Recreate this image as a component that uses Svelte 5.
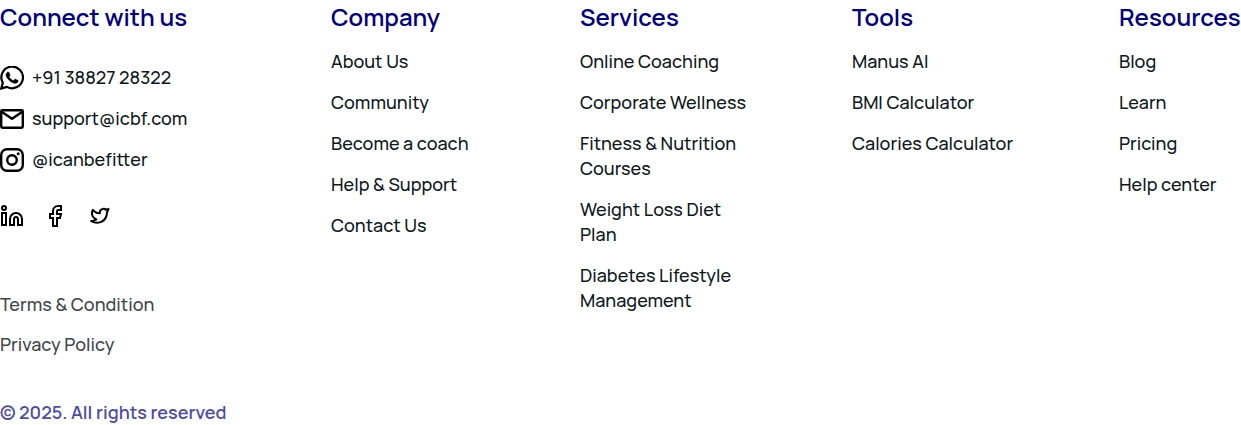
<script>
  const columns = [
    { title: 'Company', links: ['About Us', 'Community', 'Become a coach', 'Help & Support', 'Contact Us'] },
    {
      title: 'Services',
      links: [
        'Online Coaching',
        'Corporate Wellness',
        'Fitness & Nutrition Courses',
        'Weight Loss Diet Plan',
        'Diabetes Lifestyle Management'
      ]
    },
    { title: 'Tools', links: ['Manus AI', 'BMI Calculator', 'Calories Calculator'] },
    { title: 'Resources', links: ['Blog', 'Learn', 'Pricing', 'Help center'] }
  ];
</script>

<footer>
  <section class="connect">
    <h2>Connect with us</h2>
    <ul class="contacts">
      <li>
        <a href="#whatsapp">
          <svg viewBox="0 0 24 24">
            <path d="M1.3 22.4 2.8 16.8A10.8 10.8 0 1 1 7 20.9Z" fill="none" stroke="currentColor" stroke-width="2.2" />
            <path d="M17.5 14.1c-.3-.15-1.76-.87-2.03-.97-.27-.1-.47-.15-.67.15-.2.3-.77.97-.94 1.16-.17.2-.35.22-.64.08-.3-.15-1.26-.46-2.39-1.48-.88-.79-1.48-1.76-1.65-2.06-.17-.3-.02-.46.13-.6.13-.14.3-.35.45-.53.15-.17.2-.3.3-.49.1-.2.05-.37-.03-.52-.07-.15-.67-1.61-.91-2.2-.24-.6-.49-.5-.67-.51h-.57c-.2 0-.52.07-.8.37-.27.3-1.04 1.02-1.04 2.48s1.07 2.88 1.21 3.07c.15.2 2.1 3.2 5.08 4.49.7.3 1.26.49 1.7.62.7.23 1.36.2 1.87.12.57-.08 1.76-.72 2-1.41.25-.7.25-1.29.18-1.41-.08-.13-.27-.2-.57-.35Z" fill="currentColor" stroke="currentColor" stroke-width=".5" />
          </svg>
          +91 38827 28322
        </a>
      </li>
      <li>
        <a href="mailto:support@icbf.com">
          <svg viewBox="0 0 24 24" fill="none" stroke="currentColor" stroke-width="2.4">
            <rect x="1.2" y="3.2" width="21.6" height="17.6" rx="1.2" />
            <path d="m2 5 10 6.8L22 5" />
          </svg>
          support@icbf.com
        </a>
      </li>
      <li>
        <a href="#instagram">
          <svg viewBox="0 0 24 24" fill="none" stroke="currentColor" stroke-width="2.4">
            <rect x="1.2" y="1.2" width="21.6" height="21.6" rx="5.8" />
            <circle cx="12" cy="12" r="4.8" />
            <circle cx="18.2" cy="5.7" r="1.5" fill="currentColor" stroke="none" />
          </svg>
          @icanbefitter
        </a>
      </li>
    </ul>
    <div class="socials">
      <a href="#linkedin" aria-label="LinkedIn">
        <svg viewBox="0 0 24 24" fill="none" stroke="currentColor" stroke-width="2">
          <circle cx="4" cy="4" r="2" />
          <path d="M2 9h4v12H2ZM10 21v-6a6 6 0 0 1 12 0v6h-4v-6a2 2 0 0 0-4 0v6Z" />
        </svg>
      </a>
      <a href="#facebook" aria-label="Facebook">
        <svg viewBox="0 0 24 24" fill="none" stroke="currentColor" stroke-width="2">
          <path d="M17 2h-3a5 5 0 0 0-5 5v3H6v4h3v8h4v-8h3l1-4h-4V7a1 1 0 0 1 1-1h3Z" />
        </svg>
      </a>
      <a href="#twitter" aria-label="Twitter">
        <svg viewBox="0 0 24 24" fill="none" stroke="currentColor" stroke-width="2.3" stroke-linejoin="round">
          <path transform="translate(1.4 1.4) scale(.87)" d="M22 4.01c-1 .49-1.98.689-3 .99-1.121-1.265-2.783-1.335-4.38-.737S11.977 6.323 12 8v1c-3.245.083-6.135-1.395-8-4 0 0-4.182 7.433 4 11-1.872 1.247-3.739 2.088-6 2 3.308 1.803 6.913 2.423 10.034 1.517 3.58-1.04 6.522-3.723 7.651-7.742a13.84 13.84 0 0 0 .497-3.753c0-.249 1.51-2.772 1.818-4.013Z" />
        </svg>
      </a>
    </div>
    <ul class="legal">
      <li><a href="#terms">Terms &amp; Condition</a></li>
      <li><a href="#privacy">Privacy Policy</a></li>
    </ul>
    <p>© 2025. All rights reserved</p>
  </section>

  {#each columns as column}
    <nav aria-label={column.title}>
      <h2>{column.title}</h2>
      <ul>
        {#each column.links as link}
          <li><a href="#top">{link}</a></li>
        {/each}
      </ul>
    </nav>
  {/each}
</footer>

<style>
  :global(body) {
    background: #fff;
  }
  footer {
    display: grid;
    grid-template-columns: minmax(0, 227fr) minmax(0, 145fr) minmax(0, 168fr) minmax(0, 163fr) minmax(0, 122fr);
    column-gap: 104px;
    font: 500 18px/25px Manrope, Inter, sans-serif;
    color: #0e191c;
  }
  h2 {
    margin: 0 0 16px;
    font-size: 24px;
    font-weight: 600;
    line-height: 33px;
    color: #000080;
    white-space: nowrap;
  }
  ul {
    display: flex;
    flex-direction: column;
    gap: 16px;
    margin: 0;
    padding: 0;
    list-style: none;
  }
  a {
    display: block;
    color: inherit;
    text-decoration: none;
  }
  svg {
    display: block;
    flex: none;
    width: 24px;
    height: 24px;
    color: #000;
  }
  .contacts {
    margin-top: 32px;
  }
  .contacts a {
    display: flex;
    align-items: center;
    gap: 8px;
    white-space: nowrap;
  }
  .socials {
    display: flex;
    gap: 20px;
    margin-top: 32px;
  }
  .legal {
    margin-top: 64px;
    gap: 15px;
    color: #3e474a;
  }
  p {
    margin: 43px 0 0;
    font-weight: 600;
    color: #4d4da6;
    white-space: nowrap;
  }
</style>
